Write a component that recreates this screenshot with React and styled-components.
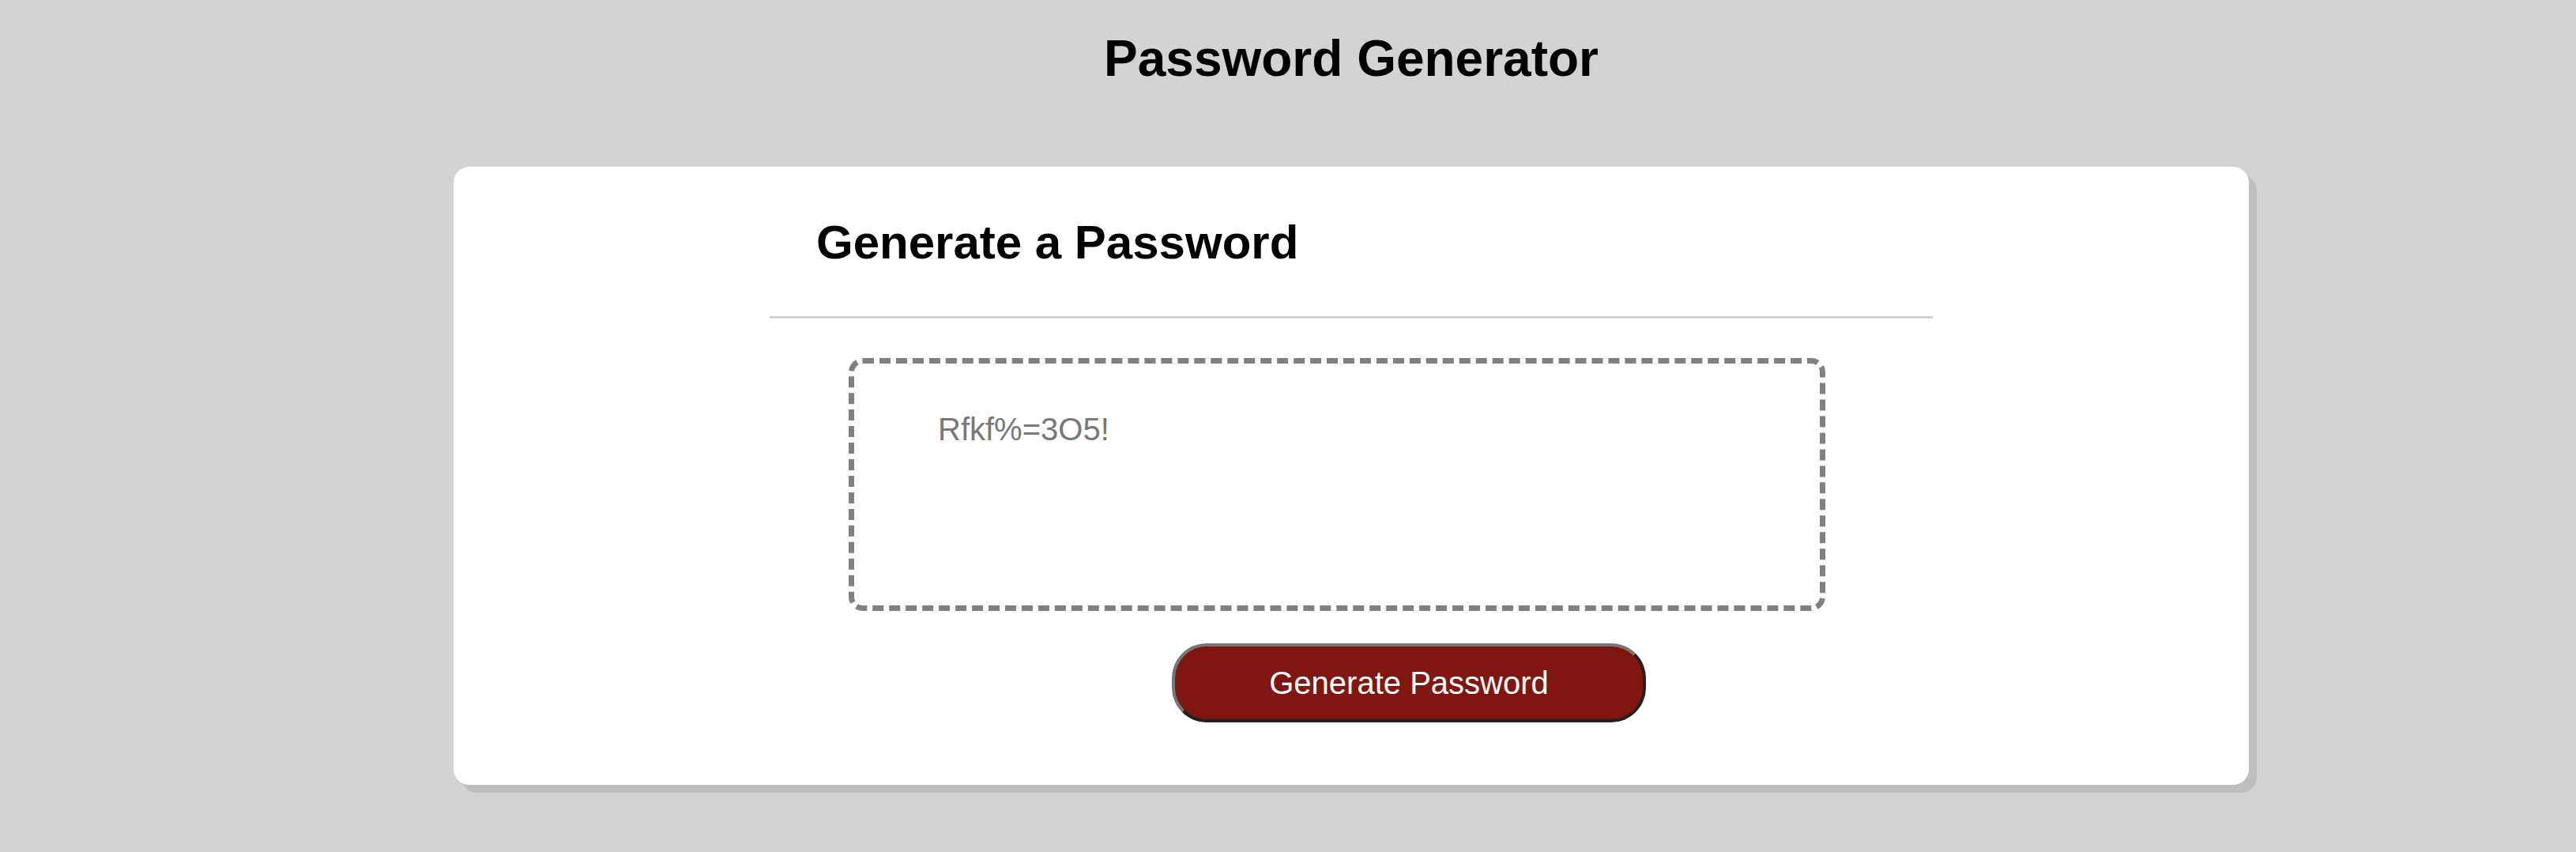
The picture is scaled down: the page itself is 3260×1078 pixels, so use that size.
import React from 'react'
import styled, { createGlobalStyle } from 'styled-components'

const GlobalStyle = createGlobalStyle`
  *, *::before, *::after {
    box-sizing: border-box;
  }
  html, body {
    margin: 0;
    padding: 0;
    background-color: #d3d3d3;
    font-family: "Liberation Sans", Arial, sans-serif;
  }
`

const Page = styled.div`
  min-height: 1078px;
  padding-left: 160px;
  padding-top: 37px;
`

const Header = styled.header`
  text-align: center;
`

const Title = styled.h1`
  margin: 0;
  font-size: 64px;
  font-weight: 700;
  color: #000;
`

const Card = styled.main`
  width: 2272px;
  margin: 100px auto 0;
  padding: 61px 400px 79px;
  background-color: #fff;
  border-radius: 20px;
  box-shadow: 10px 10px 0 #bebebe;
`

const CardHeader = styled.div`
  padding: 0 0 59px 59px;
  border-bottom: 3px solid #d3d3d3;
`

const CardTitle = styled.h2`
  margin: 0;
  font-size: 60px;
  font-weight: 700;
  color: #000;
`

const CardBody = styled.div`
  padding: 50px 136px 0 100px;
`

const PasswordBox = styled.textarea`
  display: block;
  width: 100%;
  height: 320px;
  padding: 61px 40px 0 106px;
  border: 7px dashed #808080;
  border-radius: 18px;
  font-family: "Liberation Sans", Arial, sans-serif;
  font-size: 40px;
  color: #787878;
  background: #fff;
  resize: none;
  overflow: hidden;
  outline: none;
`

const CardFooter = styled.div`
  padding: 41px 0 0 509px;
`

const GenerateButton = styled.button`
  display: block;
  width: 600px;
  height: 100px;
  background-color: #7f1710;
  color: #fff;
  border: 4px outset #767676;
  border-radius: 44px;
  font-family: "Liberation Sans", Arial, sans-serif;
  font-size: 40px;
  cursor: pointer;
`

const App = () => {
  return (
    <>
      <GlobalStyle />
      <Page>
        <Header>
          <Title>Password Generator</Title>
        </Header>
        <Card>
          <CardHeader>
            <CardTitle>Generate a Password</CardTitle>
          </CardHeader>
          <CardBody>
            <PasswordBox readOnly value="Rfkf%=3O5!" aria-label="Generated Password" />
          </CardBody>
          <CardFooter>
            <GenerateButton type="button">Generate Password</GenerateButton>
          </CardFooter>
        </Card>
      </Page>
    </>
  )
}

export default App
